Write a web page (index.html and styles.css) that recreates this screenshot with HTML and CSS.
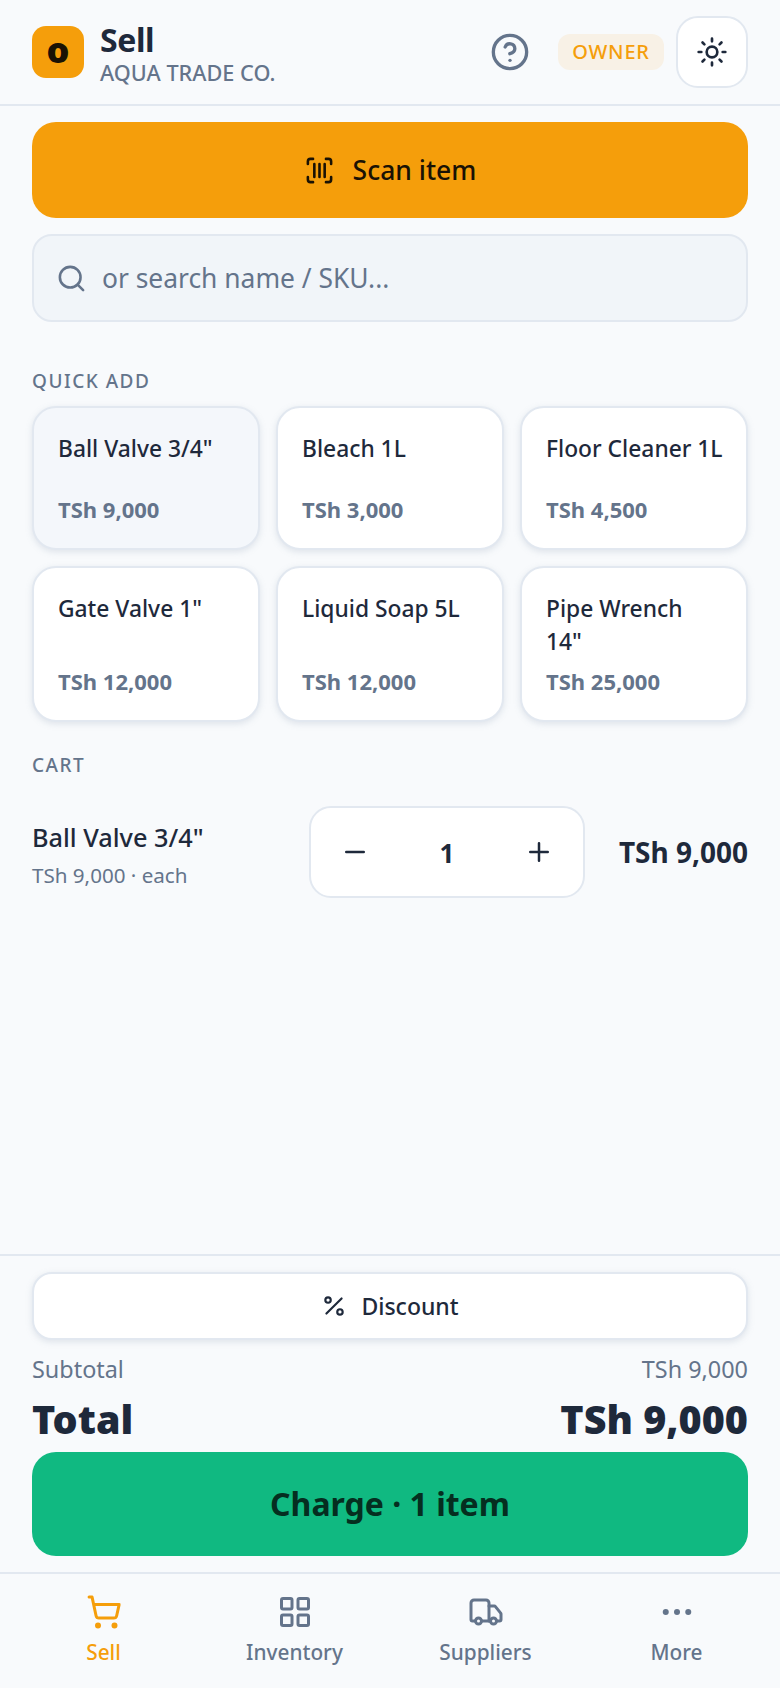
FILE: index.html
```html
<!DOCTYPE html>
<html lang="en">
<head>
<meta charset="utf-8">
<title>Sell</title>
<link rel="stylesheet" href="styles.css">
</head>
<body>
<div class="app">
  <header class="topbar">
    <div class="logo">o</div>
    <div class="title-block">
      <div class="title">Sell</div>
      <div class="subtitle">AQUA TRADE CO.</div>
    </div>
    <svg class="help" viewBox="0 0 24 24" fill="none" stroke="currentColor" stroke-width="2" stroke-linecap="round" stroke-linejoin="round"><circle cx="12" cy="12" r="10"/><path d="M9.1 9a3 3 0 0 1 5.8 1c0 2-3 3-3 3"/><path d="M12 17h.01"/></svg>
    <div class="badge">OWNER</div>
    <div class="theme-btn">
      <svg viewBox="0 0 24 24" fill="none" stroke="currentColor" stroke-width="2" stroke-linecap="round" stroke-linejoin="round"><circle cx="12" cy="12" r="4"/><path d="M12 2v2M12 20v2M4.9 4.9l1.4 1.4M17.7 17.7l1.4 1.4M2 12h2M20 12h2M6.3 17.7l-1.4 1.4M19.1 4.9l-1.4 1.4"/></svg>
    </div>
  </header>

  <main class="content">
    <div class="scan">
      <svg viewBox="0 0 24 24" fill="none" stroke="currentColor" stroke-width="2" stroke-linecap="round" stroke-linejoin="round"><path d="M3 7V5a2 2 0 0 1 2-2h2M17 3h2a2 2 0 0 1 2 2v2M21 17v2a2 2 0 0 1-2 2h-2M7 21H5a2 2 0 0 1-2-2v-2M8 7v10M12 7v10M16 7v10"/></svg>
      <span>Scan item</span>
    </div>
    <div class="search">
      <svg viewBox="0 0 24 24" fill="none" stroke="currentColor" stroke-width="2" stroke-linecap="round" stroke-linejoin="round"><circle cx="11" cy="11" r="8"/><path d="m21 21-4.3-4.3"/></svg>
      <span>or search name / SKU...</span>
    </div>

    <div class="section-label quick-label">QUICK ADD</div>
    <div class="grid">
      <div class="card card-active"><div class="card-name">Ball Valve 3/4"</div><div class="card-price">TSh 9,000</div></div>
      <div class="card"><div class="card-name">Bleach 1L</div><div class="card-price">TSh 3,000</div></div>
      <div class="card"><div class="card-name">Floor Cleaner 1L</div><div class="card-price">TSh 4,500</div></div>
      <div class="card"><div class="card-name">Gate Valve 1"</div><div class="card-price">TSh 12,000</div></div>
      <div class="card"><div class="card-name">Liquid Soap 5L</div><div class="card-price">TSh 12,000</div></div>
      <div class="card"><div class="card-name">Pipe Wrench<br>14"</div><div class="card-price">TSh 25,000</div></div>
    </div>

    <div class="section-label cart-label">CART</div>
    <div class="cart-row">
      <div class="cart-info">
        <div class="cart-name">Ball Valve 3/4"</div>
        <div class="cart-each">TSh 9,000 · each</div>
      </div>
      <div class="stepper">
        <svg viewBox="0 0 24 24" fill="none" stroke="currentColor" stroke-width="2" stroke-linecap="round"><path d="M5 12h14"/></svg>
        <span class="qty">1</span>
        <svg viewBox="0 0 24 24" fill="none" stroke="currentColor" stroke-width="2" stroke-linecap="round"><path d="M5 12h14M12 5v14"/></svg>
      </div>
      <div class="cart-total">TSh 9,000</div>
    </div>
  </main>

  <section class="checkout">
    <div class="discount">
      <svg viewBox="0 0 24 24" fill="none" stroke="currentColor" stroke-width="2" stroke-linecap="round" stroke-linejoin="round"><path d="M19 5 5 19"/><circle cx="6.5" cy="6.5" r="2.5"/><circle cx="17.5" cy="17.5" r="2.5"/></svg>
      <span>Discount</span>
    </div>
    <div class="sub-row"><span>Subtotal</span><span>TSh 9,000</span></div>
    <div class="total-row"><span>Total</span><span>TSh 9,000</span></div>
    <div class="charge">Charge · 1 item</div>
  </section>

  <nav class="tabs">
    <div class="tab tab-active">
      <svg viewBox="0 0 24 24" fill="none" stroke="currentColor" stroke-width="2" stroke-linecap="round" stroke-linejoin="round"><circle cx="8" cy="21" r="1"/><circle cx="19" cy="21" r="1"/><path d="M2.05 2.05h2l2.66 12.42a2 2 0 0 0 2 1.58h9.78a2 2 0 0 0 1.95-1.57l1.65-7.43H5.12"/></svg>
      <span>Sell</span>
    </div>
    <div class="tab">
      <svg viewBox="0 0 24 24" fill="none" stroke="currentColor" stroke-width="2" stroke-linecap="round" stroke-linejoin="round"><rect x="3" y="3" width="7" height="7" rx="1"/><rect x="14" y="3" width="7" height="7" rx="1"/><rect x="3" y="14" width="7" height="7" rx="1"/><rect x="14" y="14" width="7" height="7" rx="1"/></svg>
      <span>Inventory</span>
    </div>
    <div class="tab">
      <svg viewBox="0 0 24 24" fill="none" stroke="currentColor" stroke-width="2" stroke-linecap="round" stroke-linejoin="round"><path d="M14 18V6a2 2 0 0 0-2-2H4a2 2 0 0 0-2 2v11a1 1 0 0 0 1 1h2"/><path d="M15 18H9"/><path d="M19 18h2a1 1 0 0 0 1-1v-3.65a1 1 0 0 0-.22-.62l-3.48-4.35A1 1 0 0 0 17.52 8H14"/><circle cx="17" cy="18" r="2"/><circle cx="7" cy="18" r="2"/></svg>
      <span>Suppliers</span>
    </div>
    <div class="tab">
      <svg viewBox="0 0 24 24" fill="currentColor"><circle cx="4.5" cy="12" r="2"/><circle cx="12" cy="12" r="2"/><circle cx="19.5" cy="12" r="2"/></svg>
      <span>More</span>
    </div>
  </nav>
</div>
</body>
</html>
```

FILE: styles.css
```css
* { box-sizing: border-box; }
html, body { margin: 0; padding: 0; }
body {
  background: #f8fafc;
  color: #1e293b;
  font-family: "Noto Sans", "Open Sans", sans-serif;
}
.app {
  width: 780px;
  height: 1688px;
  display: flex;
  flex-direction: column;
  overflow: hidden;
}

.topbar {
  height: 106px;
  flex: none;
  padding: 0 32px;
  display: flex;
  align-items: center;
  border-bottom: 2px solid #e2e8f0;
}
.logo {
  width: 52px;
  height: 52px;
  border-radius: 14px;
  background: #f59e0b;
  color: #1a1204;
  font-size: 36px;
  font-weight: 900;
  line-height: 48px;
  text-align: center;
  flex: none;
}
.title-block { margin-left: 16px; flex: 1; padding-top: 5px; }
.title { font-size: 32px; font-weight: 700; line-height: 34px; letter-spacing: -0.4px; color: #1e293b; }
.subtitle { font-size: 21.7px; font-weight: 500; line-height: 26px; color: #64748b; margin-top: 3px; }
.help { width: 40px; height: 40px; color: #64748b; flex: none; }
.badge {
  margin-left: 28px;
  width: 106px;
  height: 36px;
  border-radius: 12px;
  background: #f8f1e6;
  color: #f59e0b;
  font-size: 20px;
  font-weight: 500;
  letter-spacing: 0.8px;
  line-height: 36px;
  text-align: center;
  flex: none;
}
.theme-btn {
  margin-left: 12px;
  width: 72px;
  height: 72px;
  border: 2px solid #e2e8f0;
  border-radius: 22px;
  background: #fff;
  display: flex;
  align-items: center;
  justify-content: center;
  flex: none;
}
.theme-btn svg { width: 32px; height: 32px; }

.content { flex: 1; padding: 16px 32px 0; min-height: 0; }
.scan {
  height: 96px;
  border-radius: 24px;
  background: #f59e0b;
  color: #1a1204;
  display: flex;
  align-items: center;
  justify-content: center;
  gap: 18px;
  font-size: 26.5px;
  font-weight: 500;
}
.scan svg { width: 31px; height: 31px; }
.search {
  margin-top: 16px;
  height: 88px;
  border: 2px solid #e2e8f0;
  border-radius: 20px;
  background: #f1f5f9;
  color: #64748b;
  display: flex;
  align-items: center;
  padding-left: 22px;
  gap: 15px;
  font-size: 26.4px;
}
.search svg { width: 31px; height: 31px; flex: none; }

.section-label { font-size: 19px; font-weight: 500; letter-spacing: 1.5px; line-height: 24px; color: #64748b; }
.quick-label { margin-top: 47px; }
.grid {
  margin-top: 13px;
  display: grid;
  grid-template-columns: repeat(3, 228px);
  grid-template-rows: 144px 156px;
  gap: 16px;
}
.card {
  background: #fff;
  border: 2px solid #e2e8f0;
  border-radius: 24px;
  padding: 24px 16px 25px 24px;
  box-shadow: 0 2px 6px rgba(148, 163, 184, 0.25);
  display: flex;
  flex-direction: column;
  justify-content: space-between;
}
.card-active { background: #f4f7fb; }
.card-name { font-size: 22.8px; font-weight: 500; line-height: 33px; color: #1e293b; }
.card-price { font-size: 22px; font-weight: 700; line-height: 28px; color: #64748b; }

.cart-label { margin-top: 31px; }
.cart-row {
  margin-top: 29px;
  display: flex;
  align-items: center;
}
.cart-info { width: 277px; flex: none; padding-top: 6px; }
.cart-name { font-size: 25.3px; font-weight: 500; line-height: 30px; color: #1e293b; }
.cart-each { font-size: 20.6px; line-height: 28px; color: #64748b; margin-top: 9px; }
.stepper {
  width: 276px;
  height: 92px;
  border: 2px solid #e2e8f0;
  border-radius: 22px;
  background: #fff;
  display: flex;
  align-items: center;
  justify-content: space-between;
  padding: 0 29px;
  flex: none;
}
.stepper svg { width: 30px; height: 30px; }
.qty { font-size: 26px; font-weight: 700; color: #1e293b; padding-top: 2px; }
.cart-total { flex: 1; text-align: right; font-size: 28px; font-weight: 700; color: #1e293b; white-space: nowrap; }

.checkout {
  height: 318px;
  flex: none;
  border-top: 2px solid #e2e8f0;
  padding: 16px 32px 0;
}
.discount {
  height: 68px;
  border: 2px solid #e2e8f0;
  border-radius: 20px;
  background: #fff;
  box-shadow: 0 2px 6px rgba(148, 163, 184, 0.25);
  display: flex;
  align-items: center;
  justify-content: center;
  gap: 14px;
  font-size: 23px;
  font-weight: 500;
}
.discount svg { width: 26px; height: 26px; }
.sub-row {
  margin-top: 14px;
  display: flex;
  justify-content: space-between;
  font-size: 23.4px;
  line-height: 30px;
  color: #64748b;
}
.total-row {
  margin-top: 11px;
  display: flex;
  justify-content: space-between;
  font-size: 39.5px;
  font-weight: 900;
  line-height: 48px;
  color: #1e293b;
}
.charge {
  margin-top: 9px;
  height: 104px;
  border-radius: 24px;
  background: #10b981;
  color: #052e20;
  font-size: 32px;
  font-weight: 700;
  line-height: 104px;
  text-align: center;
}

.tabs {
  height: 116px;
  flex: none;
  border-top: 2px solid #e2e8f0;
  display: grid;
  grid-template-columns: repeat(4, 1fr);
  padding: 0 8px;
}
.tab {
  display: flex;
  flex-direction: column;
  align-items: center;
  padding-top: 20px;
  color: #64748b;
  font-size: 20.8px;
  font-weight: 500;
  line-height: 30px;
}
.tab svg { width: 36px; height: 36px; margin-bottom: 7px; }
.tab-active { color: #f59e0b; }
```
